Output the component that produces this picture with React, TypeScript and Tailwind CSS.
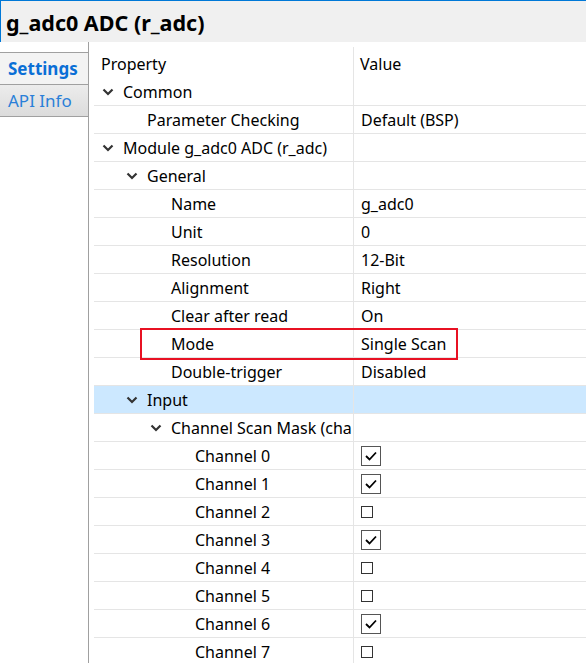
import type { ReactNode } from "react";

type Row = {
  label: string;
  depth: number;
  group?: boolean;
  value?: ReactNode;
  selected?: boolean;
  marked?: boolean;
};

function Chevron() {
  return (
    <svg width="12" height="8" viewBox="0 0 12 8" className="shrink-0">
      <path d="M1.5 1.5 L6 6 L10.5 1.5" fill="none" stroke="#333" strokeWidth="2.2" />
    </svg>
  );
}

function Check({ on }: { on: boolean }) {
  if (!on) {
    return <span className="block w-[12px] h-[12px] border border-[#333] bg-white" />;
  }
  return (
    <span className="flex w-[20px] h-[20px] items-center justify-center border border-[#555] bg-white">
      <svg width="12" height="10" viewBox="0 0 12 10">
        <path d="M1 5 L4.5 8.5 L11 1.5" fill="none" stroke="#000" strokeWidth="1.8" />
      </svg>
    </span>
  );
}

const channels = [true, true, false, true, false, false, true, false];

const rows: Row[] = [
  { label: "Common", depth: 0, group: true },
  { label: "Parameter Checking", depth: 1, value: "Default (BSP)" },
  { label: "Module g_adc0 ADC (r_adc)", depth: 0, group: true },
  { label: "General", depth: 1, group: true },
  { label: "Name", depth: 2, value: "g_adc0" },
  { label: "Unit", depth: 2, value: "0" },
  { label: "Resolution", depth: 2, value: "12-Bit" },
  { label: "Alignment", depth: 2, value: "Right" },
  { label: "Clear after read", depth: 2, value: "On" },
  { label: "Mode", depth: 2, value: "Single Scan", marked: true },
  { label: "Double-trigger", depth: 2, value: "Disabled" },
  { label: "Input", depth: 1, group: true, selected: true },
  { label: "Channel Scan Mask (cha", depth: 2, group: true },
  ...channels.map((on, i) => ({
    label: `Channel ${i}`,
    depth: 3,
    value: <Check on={on} />,
  })),
];

function PropertyRow({ row }: { row: Row }) {
  const pad = 8 + 24 * row.depth + (row.group ? 0 : 21);
  return (
    <div
      className={`relative flex h-[28px] border-b border-[#e5e5e5] ${
        row.selected ? "bg-[#cce8ff]" : "bg-white"
      }`}
    >
      <div
        className="flex w-[259px] shrink-0 items-center overflow-hidden whitespace-nowrap"
        style={{ paddingLeft: pad }}
      >
        {row.group && (
          <span className="flex w-[21px] shrink-0">
            <Chevron />
          </span>
        )}
        <span>{row.label}</span>
      </div>
      <div className="flex flex-1 items-center border-l border-[#e5e5e5] pl-[7px] whitespace-nowrap">
        {row.value}
      </div>
      {row.marked && (
        <div className="absolute z-10 left-[46px] top-[-2px] w-[318px] h-[32px] border-2 border-[#e81123] pointer-events-none" />
      )}
    </div>
  );
}

export default function App() {
  return (
    <div
      className="w-[586px] h-[663px] overflow-hidden bg-white text-[16px] text-black flex flex-col"
      style={{ fontFamily: '"Noto Sans", "Segoe UI", sans-serif' }}
    >
      <div className="h-[42px] shrink-0 bg-[#f0f0f0] border-t border-l border-[#0078d7] flex items-center pl-[5px] pt-[3px]">
        <span className="text-[21.5px] font-bold leading-none">g_adc0 ADC (r_adc)</span>
      </div>
      <div className="flex flex-1 min-h-0">
        <div className="w-[89px] shrink-0 border-r border-[#a0a0a0] pt-[10px] text-[17px]">
          <div className="h-[33px] border-t border-b border-[#a0a0a0] bg-[#f3f3f3] flex items-center pl-[8px] font-bold text-[#0a6fd6]">
            Settings
          </div>
          <div className="h-[32px] border-b border-[#a0a0a0] bg-gradient-to-b from-[#ececec] to-[#dcdcdc] flex items-center pl-[8px] text-[#2a7fd8]">
            API Info
          </div>
        </div>
        <div className="flex-1 pl-[5px] pt-[5px]">
          <div className="flex h-[31px]">
            <div className="w-[259px] shrink-0 pl-[7px] pt-[5px]">Property</div>
            <div className="flex-1 border-l border-[#e5e5e5] pl-[6px] pt-[5px]">Value</div>
          </div>
          {rows.map((row) => (
            <PropertyRow key={row.label} row={row} />
          ))}
        </div>
      </div>
    </div>
  );
}
